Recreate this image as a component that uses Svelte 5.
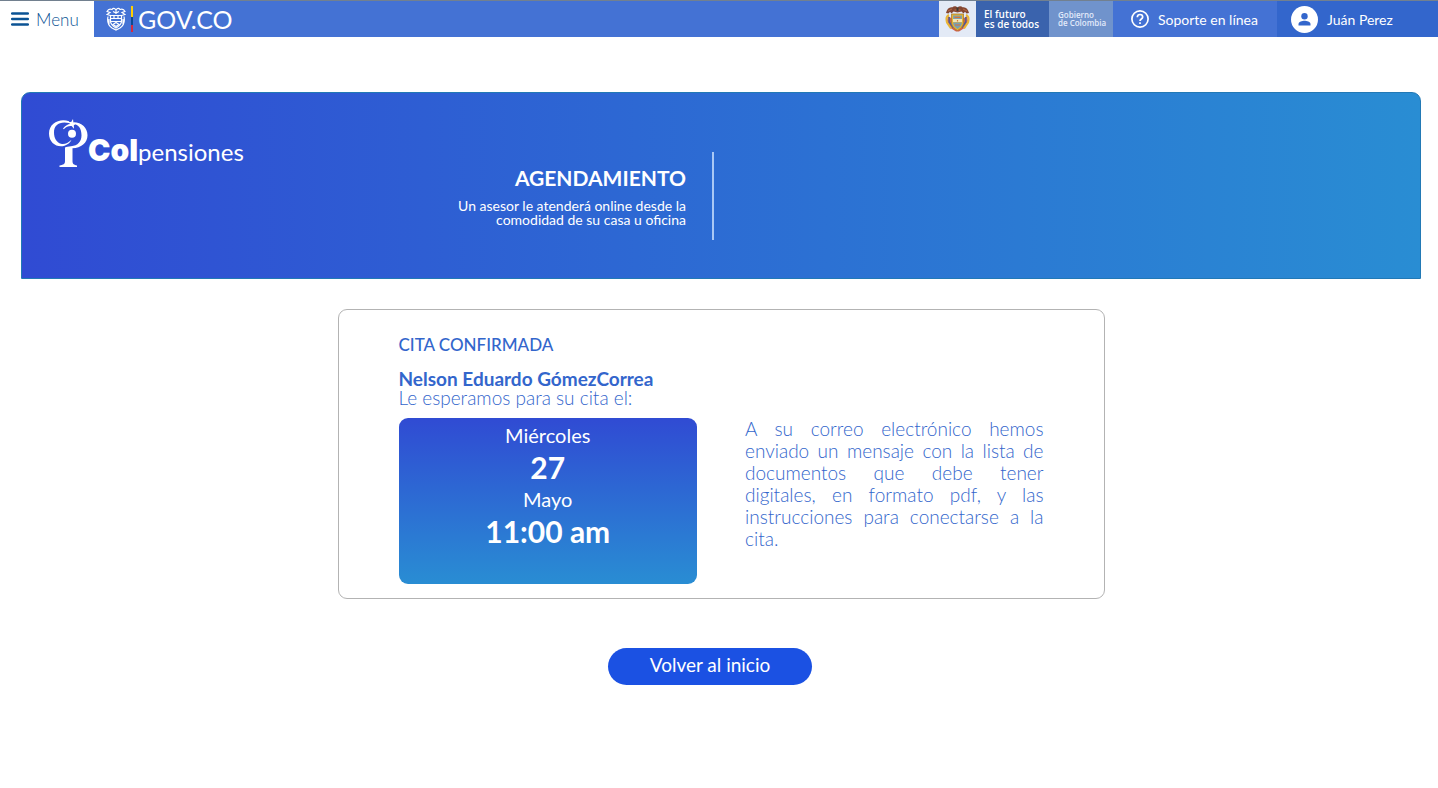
<script>
  const appointment = {
    name: 'Nelson Eduardo GómezCorrea',
    weekday: 'Miércoles',
    day: '27',
    month: 'Mayo',
    time: '11:00 am'
  };
</script>

<header class="topbar">
  <button class="menu" type="button">
    <svg width="18" height="14" viewBox="0 0 18 14" aria-hidden="true">
      <path d="M1.2 1.5h15.6M1.2 7h15.6M1.2 12.5h15.6" stroke="#0b5394" stroke-width="2.5" stroke-linecap="round" />
    </svg>
    <span>Menu</span>
  </button>

  <a class="gov" href="#gov">
    <svg width="20" height="24" viewBox="0 0 20 24" fill="none" stroke="#fff" stroke-width="1.2" aria-hidden="true">
      <path d="M10 3C8.500 1 7 1 6 2.500 4 1.500 2 2.500 1 4.500l3 1-3 2 3.500 1M10 3c1.500-2 3-2 4-.5 2-1 4 0 5 2l-3 1 3 2-3.500 1M7 4.500l3 1.500 3-1.500M10 3v4" />
      <path d="M4.500 8.500h11v6c0 3-2.500 4.500-5.500 6.500-3-2-5.500-3.500-5.500-6.500z" />
      <path d="M5 11.500h10M5 14.500h10M8 9v3M12 9v3M7 17.500l3-2 3 2-3 2z" />
      <path d="M2 9.500c-1 5 0 9 4 11.500l4 2 4-2c4-2.500 5-6.500 4-11.500M3 12v5M17 12v5" />
    </svg>
    <svg width="2" height="26" viewBox="0 0 2 26" aria-hidden="true">
      <path fill="#ffd000" d="M0 0h2v11H0z" /><path fill="#0b4a94" d="M0 11h2v8H0z" /><path fill="#d7283f" d="M0 19h2v7H0z" />
    </svg>
    <span>GOV.CO</span>
  </a>

  <div class="emblem">
    <svg width="25" height="28" viewBox="0 0 25 28" role="img" aria-label="Escudo de Colombia">
      <path d="M3 11l-1 5 3.500 7 5.500 3.500h3l5.500-3.500 3.500-7-1-5-3 2H6z" fill="#d0604a" />
      <path d="M4 10C1.500 11 1 14 2 17.500l4 6M21 10c2.500 1 3 4 2 7.500l-4 6" fill="none" stroke="#e8b635" stroke-width="2" />
      <path d="M4.200 12v5l4 5.500M20.800 12v5l-4 5.500" fill="none" stroke="#41609f" stroke-width="1.300" />
      <path d="M6.500 9h12v8c0 4-2.500 6.500-6 8.500-3.500-2-6-4.500-6-8.500z" fill="#e6b535" stroke="#a97d2d" stroke-width=".8" />
      <path d="M8 10.500h9V14H8z" fill="#7fa3ab" /><path d="M8 14h9v3H8z" fill="#f0e5b8" />
      <path d="M8 17.500h9c-.2 3-1.800 4.500-4.500 6.500-2.700-2-4.300-3.500-4.500-6.500z" fill="#78a0b4" />
      <path d="M9.500 12.300h6M12.500 15v1.500M10 20h5" stroke="#d87337" stroke-width="1.200" />
      <path d="M12.500 2.500C11 .8 8.500.8 7.500 2.300 4.500 1.500 1.800 3.800 1 8l2.500.5L5 6.800 6.500 8.500l2-2 4 1 4-1 2 2L20 6.800l1.500 1.700L24 8c-.8-4.200-3.500-6.500-6.500-5.700-1-1.500-3.500-1.500-5 .2z" fill="#844631" />
      <path d="M3 6l4-2M22 6l-4-2M9.500 5h6" fill="none" stroke="#b86a43" />
      <path d="M11.500 2.500h2V6h-2z" fill="#3f3a33" />
    </svg>
  </div>
  <div class="future"><span>El futuro</span><span>es de todos</span></div>
  <div class="government"><span>Gobierno</span><span>de Colombia</span></div>

  <a class="support" href="#soporte">
    <svg width="18" height="18" viewBox="0 0 18 18" fill="none" stroke="#fff" stroke-width="1.700" aria-hidden="true">
      <circle cx="9" cy="9" r="8.100" />
      <path d="M6.300 7.200C6.300 5.500 7.500 4.500 9 4.500s2.700 1 2.700 2.500C11.700 9 9 9 9 11" />
      <path d="M9 12.300v1.700" />
    </svg>
    <span>Soporte en línea</span>
  </a>
  <a class="user" href="#perfil">
    <svg width="27" height="27" viewBox="0 0 27 27" aria-hidden="true">
      <circle cx="13.500" cy="13.500" r="13.500" fill="#fff" />
      <circle cx="13.500" cy="10.300" r="3.200" fill="#3366cc" />
      <path d="M7.500 19.500V18c0-2.400 3.800-3.300 6-3.300s6 .9 6 3.300v1.500z" fill="#3366cc" />
    </svg>
    <span>Juán Perez</span>
  </a>
</header>

<main>
  <section class="banner">
    <div class="brand">
      <svg width="39" height="49" viewBox="0 0 39 49" fill="#fff" aria-hidden="true">
        <path d="M20 2.300C11-1 0 4 0 14.500 0 24 8 29 15.500 26.800c3.800-1.300 6-3.600 7-6-3.500 3.500-7 4.700-10.500 4C7.500 23.500 5 19 5 13.500 5 6 10.500 2 20 4z" />
        <path d="M24.500 3.300C33 3.300 38.500 9 38.500 16.300 38.500 24 32 29 23.500 29.300V42c0 3 1 3.700 4.500 4.400V48H10.500v-1.600C15 45.700 16 45 16 42V28.500c1.500-.6 3.500-1 6-1.200 7-.6 10.500-4.800 10.500-11.000 0-7-3-11-8-11.400z" />
        <circle cx="23" cy="14.700" r="4" />
        <path d="M14 9.600c2.500-3.200 5-4.400 7.200-4.600L18.500 2.800l3.700.2L24 0l.4 3.400 3.200 1.100-2.800 1.700.2 3.600-2.400-2.800c-3-.3-5.500.8-7.800 3.200z" />
      </svg>
      <div class="wordmark"><strong>Col</strong><span>pensiones</span></div>
    </div>
    <div class="intro">
      <h1>AGENDAMIENTO</h1>
      <p>Un asesor le atenderá online desde la<br />comodidad de su casa u oficina</p>
    </div>
  </section>

  <section class="card">
    <h2>CITA CONFIRMADA</h2>
    <h3>{appointment.name}</h3>
    <p class="lead">Le esperamos para su cita el:</p>
    <div class="columns">
      <div class="date">
        <span class="small">{appointment.weekday}</span>
        <strong>{appointment.day}</strong>
        <span class="small">{appointment.month}</span>
        <strong>{appointment.time}</strong>
      </div>
      <p class="message">
        A su correo electrónico hemos enviado un mensaje con la lista de documentos que debe tener
        digitales, en formato pdf, y las instrucciones para conectarse a la cita.
      </p>
    </div>
  </section>

  <div class="actions">
    <button class="back" type="button">Volver al inicio</button>
  </div>
</main>

<style>
  :global(body) {
    margin: 0;
    background: #fff;
    font-family: Lato, 'Liberation Sans', sans-serif;
  }
  h1, h2, h3, p { margin: 0; }
  a { color: inherit; text-decoration: none; }
  button { font-family: inherit; border: 0; cursor: pointer; }
  svg { flex: none; display: block; }

  .topbar {
    display: flex;
    height: 36px;
    border-top: 1px solid #72808f;
    background: #4472d4;
    color: #fff;
    white-space: nowrap;
  }
  .menu {
    display: flex;
    align-items: center;
    gap: 7px;
    width: 94px;
    padding: 0 0 0 11px;
    background: #fff;
    color: #0b5394;
    font-size: 17px;
    font-weight: 300;
  }
  .gov {
    display: flex;
    align-items: center;
    gap: 5px;
    margin-right: auto;
    padding-left: 12px;
    font-size: 25px;
  }
  .emblem, .support, .user { display: flex; align-items: center; }
  .emblem { justify-content: center; width: 37px; background: #e3eaf6; }
  .future, .government {
    box-sizing: border-box;
    display: flex;
    flex-direction: column;
    justify-content: center;
    font-family: 'Open Sans', sans-serif;
  }
  .future {
    width: 73px;
    padding-left: 8px;
    background: #3a63ad;
    font-size: 10px;
    line-height: 10px;
    font-weight: 600;
  }
  .government {
    width: 64px;
    padding-left: 9px;
    background: #7093cc;
    color: #e2eafa;
    font-size: 8px;
    line-height: 8px;
    font-weight: 600;
  }
  .support { box-sizing: border-box; width: 164px; padding-left: 18px; gap: 9px; font-size: 14px; }
  .user {
    box-sizing: border-box;
    width: 161px;
    padding-left: 14px;
    gap: 9px;
    background: #3366cc;
    font-size: 14px;
  }

  main { padding: 55px 17px 32px 21px; }
  .banner {
    box-sizing: border-box;
    display: grid;
    grid-template-columns: 1fr 2fr 3fr;
    min-height: 187px;
    padding: 26px 41px 38px 27px;
    border: 1px solid #2279b5;
    border-radius: 9px 9px 0 0;
    background: linear-gradient(90deg, #304bd3, #298dd3);
    color: #fff;
  }
  .brand { display: flex; align-items: flex-start; }
  .wordmark { display: flex; align-items: baseline; padding-top: 13px; line-height: 36px; }
  .wordmark strong { font-family: Inter, sans-serif; font-size: 30px; font-weight: 900; }
  .wordmark span { font-size: 24px; }
  .intro {
    box-sizing: border-box;
    align-self: end;
    height: 88px;
    padding: 13px 26px 0 0;
    border-right: 2px solid #a9c8f5;
    text-align: right;
    white-space: nowrap;
  }
  h1 { font-size: 21px; line-height: 26px; font-weight: 700; }
  .intro p { margin-top: 8px; font-size: 14px; line-height: 14px; }

  .card {
    box-sizing: border-box;
    max-width: 767px;
    margin: 30px auto 0;
    padding: 25px 60px 14px;
    border: 1px solid #b3b3b3;
    border-radius: 9px;
    color: #3366cc;
  }
  h2 { font-size: 17px; line-height: 20px; font-weight: 500; }
  h3 { margin-top: 14px; font-size: 19px; line-height: 19px; font-weight: 700; }
  .lead { font-size: 19px; line-height: 20px; font-weight: 300; }
  .columns { display: grid; grid-template-columns: 1fr 1fr; gap: 48px; margin-top: 10px; }
  .date {
    display: flex;
    flex-direction: column;
    align-items: center;
    box-sizing: border-box;
    min-height: 166px;
    padding-top: 2px;
    border-radius: 9px;
    background: linear-gradient(#304bd3, #298dd3);
    color: #fff;
  }
  .small { font-size: 20px; line-height: 30px; }
  .date strong { font-size: 30px; line-height: 34px; font-weight: 700; }
  .message {
    font-size: 19px;
    line-height: 22px;
    font-weight: 300;
    text-align: justify;
  }
  .actions { display: flex; justify-content: center; padding: 49px 22px 0 0; }
  .back {
    min-width: 204px;
    height: 37px;
    padding: 0 24px 5px;
    border-radius: 19px;
    background: #1b51e3;
    color: #fff;
    font-size: 19px;
  }
</style>
